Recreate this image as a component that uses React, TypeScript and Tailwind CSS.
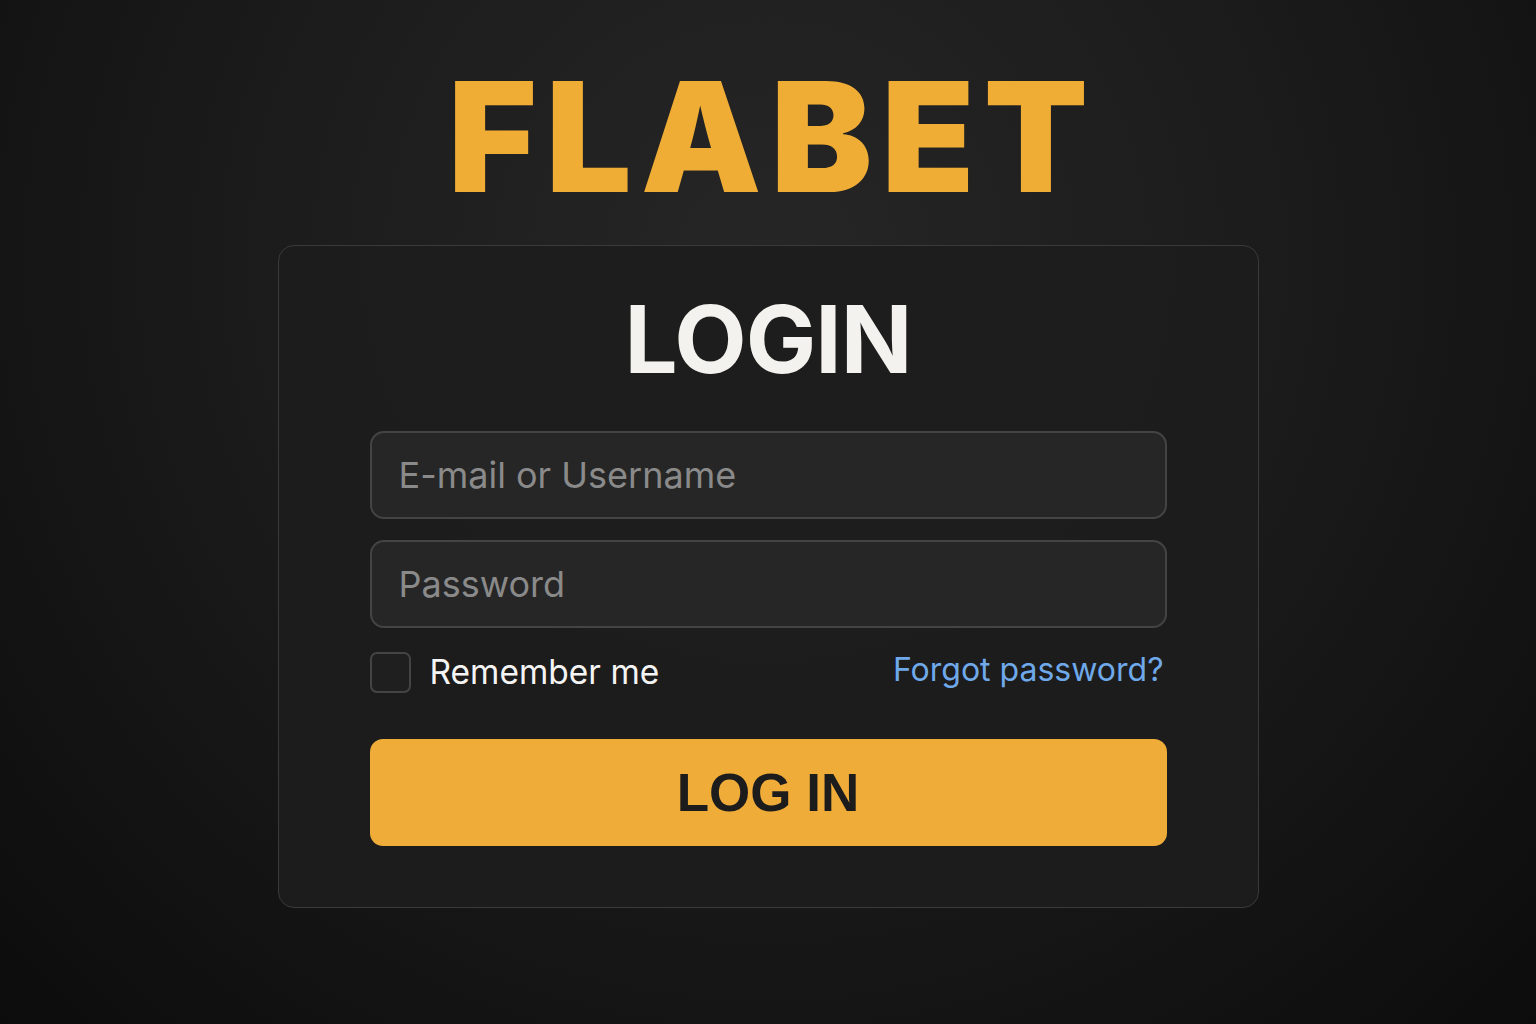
export default function App() {
  return (
    <div className="min-h-screen w-full flex flex-col items-center bg-[radial-gradient(ellipse_at_50%_25%,#262626_0%,#1c1c1c_45%,#0c0c0c_100%)]"
      style={{ fontFamily: 'Inter, "Noto Sans", sans-serif' }}>
      {/* Logo */}
      <h1 className="mt-[57px] h-[160px] text-[152px] leading-[160px] font-black tracking-[0.06em] text-[#f0ad35] pl-[0.06em]">
        FLABET
      </h1>

      {/* Card */}
      <div className="mt-[28px] w-[981px] h-[663px] rounded-2xl border border-[#3a3a3a] bg-[#1d1d1d]/90 px-[91px] pt-[38px] flex flex-col">
        <h2 className="text-center text-[94px] leading-[110px] font-bold tracking-[-0.01em] text-[#f4f2ee]">LOGIN</h2>

        <div className="mt-[37px] flex flex-col gap-[21px]">
          <input
            type="text"
            placeholder="E-mail or Username"
            className="h-[88px] w-full rounded-[14px] border-2 border-[#444] bg-[#262626] px-[27px] text-[36px] text-white placeholder:text-[#8a8a8a] outline-none"
          />
          <input
            type="password"
            placeholder="Password"
            className="h-[88px] w-full rounded-[14px] border-2 border-[#444] bg-[#262626] px-[27px] text-[36px] text-white placeholder:text-[#8a8a8a] outline-none"
          />
        </div>

        <div className="mt-[19px] flex items-center justify-between">
          <label className="flex items-center gap-[19px]">
            <span className="w-[41px] h-[41px] rounded-[7px] border-2 border-[#444] bg-[#1f1f1f]" />
            <span className="text-[33.5px] text-[#f4f4f4]">Remember me</span>
          </label>
          <a href="#" className="text-[32px] text-[#6fa9ea] -mt-[4px] pr-[3px]">Forgot password?</a>
        </div>

        <button className="mt-[42px] h-[107px] w-full rounded-[13px] bg-[#f0ac38] text-[53px] font-bold text-[#1c1c1c]"
          style={{ fontFamily: '"Liberation Sans", Arial, sans-serif' }}>
          LOG IN
        </button>
      </div>
    </div>
  )
}
